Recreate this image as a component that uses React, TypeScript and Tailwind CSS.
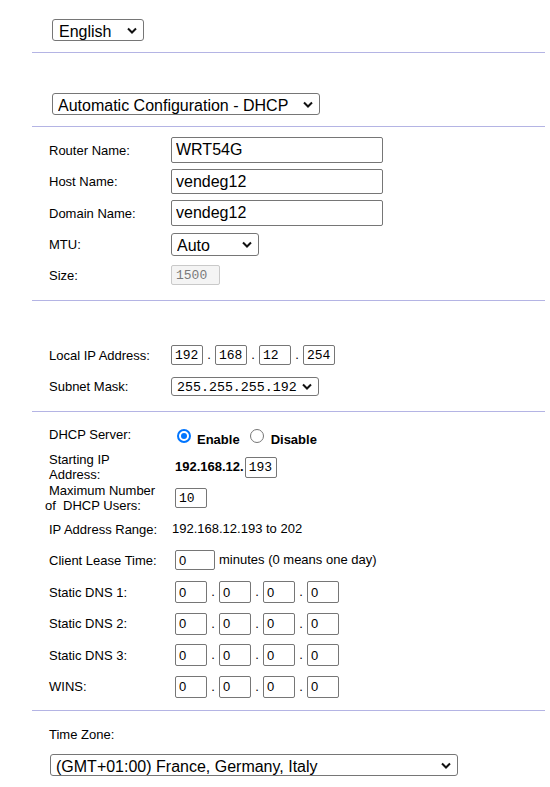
import React from "react";

const mono = "font-['Liberation_Mono','Courier_New',monospace]";

const Chevron = () => (
  <svg width="10" height="7" viewBox="0 0 10 7" className="shrink-0">
    <path d="M1 1.5l4 4 4-4" fill="none" stroke="#111" strokeWidth="2" />
  </svg>
);

type SelectProps = { options: string[]; box: string; text: string };

const Select = ({ options, box, text }: SelectProps) => (
  <div
    className={`flex items-center border border-[#767676] rounded-[3px] bg-white pr-[6px] ${box}`}
  >
    <select
      defaultValue={options[0]}
      className={`appearance-none bg-transparent outline-none flex-1 min-w-0 h-full p-0 ${text}`}
    >
      {options.map((o) => (
        <option key={o}>{o}</option>
      ))}
    </select>
    <Chevron />
  </div>
);

const Radio = ({ checked, className }: { checked?: boolean; className: string }) =>
  checked ? (
    <span
      className={`w-[14px] h-[14px] rounded-full border-2 border-[#0075ff] bg-white flex items-center justify-center shrink-0 ${className}`}
    >
      <span className="block w-[6px] h-[6px] rounded-full bg-[#0075ff]" />
    </span>
  ) : (
    <span
      className={`block w-[14px] h-[14px] rounded-full border border-[#767676] bg-white shrink-0 ${className}`}
    />
  );

const IpGroup = ({ values, box }: { values: string[]; box: string }) => (
  <div className="flex items-center">
    {values.map((v, i) => (
      <React.Fragment key={i}>
        {i > 0 && <span className="w-[12px] text-center">.</span>}
        <input defaultValue={v} className={box} />
      </React.Fragment>
    ))}
  </div>
);

const Row = ({
  label,
  width,
  className = "",
  children,
}: {
  label: React.ReactNode;
  width: string;
  className?: string;
  children?: React.ReactNode;
}) => (
  <div className={`flex items-center ${className}`}>
    <div className={`shrink-0 leading-[15px] ${width}`}>{label}</div>
    {children}
  </div>
);

const textInput =
  "w-[212px] border border-[#767676] rounded-[2px] pl-[4px] text-[16px] bg-white";
const monoBox = `w-[32px] h-[20px] border border-[#767676] rounded-[2px] px-[3px] text-[13px] ${mono}`;
const sansBox =
  "w-[32px] h-[22px] border border-[#767676] rounded-[2px] px-[3px] text-[13px]";

export default function App() {
  return (
    <div className="w-[550px] min-h-[787px] bg-white text-black text-[13px] font-['Liberation_Sans',Arial,sans-serif] pl-[32px] pr-[5px]">
      {/* language */}
      <div className="border-b border-[#b4b4e4] pt-[19px] pb-[11px] pl-[20px]">
        <Select
          options={["English"]}
          box="w-[92px] h-[22px]"
          text="text-[16px] pl-[6px]"
        />
      </div>

      {/* connection type */}
      <div className="border-b border-[#b4b4e4] pt-[40px] pb-[11px] pl-[20px]">
        <Select
          options={["Automatic Configuration - DHCP"]}
          box="w-[268px] h-[22px]"
          text="text-[16px] pl-[5px]"
        />
      </div>

      {/* router settings */}
      <div className="border-b border-[#b4b4e4] pt-[10px] pb-[15px] pl-[17px]">
        <Row label="Router Name:" width="w-[122px]">
          <input defaultValue="WRT54G" className={`${textInput} h-[26px]`} />
        </Row>
        <Row label="Host Name:" width="w-[122px]" className="mt-[6px]">
          <input defaultValue="vendeg12" className={`${textInput} h-[25px]`} />
        </Row>
        <Row label="Domain Name:" width="w-[122px]" className="mt-[6px]">
          <input defaultValue="vendeg12" className={`${textInput} h-[26px]`} />
        </Row>
        <Row label="MTU:" width="w-[122px]" className="mt-[7px]">
          <Select
            options={["Auto", "Manual"]}
            box="w-[88px] h-[23px]"
            text="text-[16px] pl-[5px]"
          />
        </Row>
        <Row label="Size:" width="w-[122px]" className="mt-[9px]">
          <input
            disabled
            defaultValue="1500"
            className={`w-[49px] h-[20px] border border-[#c9c9c9] rounded-[2px] bg-[#f4f4f4] text-[#7a7a7a] px-[4px] text-[13px] ${mono}`}
          />
        </Row>
      </div>

      {/* network setup */}
      <div className="border-b border-[#b4b4e4] pt-[44px] pb-[15px] pl-[17px]">
        <Row label="Local IP Address:" width="w-[122px]">
          <IpGroup values={["192", "168", "12", "254"]} box={monoBox} />
        </Row>
        <Row label="Subnet Mask:" width="w-[122px]" className="mt-[12px]">
          <Select
            options={["255.255.255.192"]}
            box="w-[148px] h-[19px]"
            text={`text-[13.3px] pl-[5px] ${mono}`}
          />
        </Row>
      </div>

      {/* dhcp */}
      <div className="border-b border-[#b4b4e4] pt-[15px] pb-[12.5px] pl-[17px]">
        <div className="flex items-start h-[20px]">
          <div className="w-[123px] shrink-0 leading-[15px]">DHCP Server:</div>
          <div className="flex items-start pt-[2px] font-bold">
            <Radio checked className="ml-[5px]" />
            <span className="ml-[6px] mt-[2.5px] leading-[15px]">Enable</span>
            <Radio className="ml-[10px]" />
            <span className="ml-[7px] mt-[2.5px] leading-[15px]">Disable</span>
          </div>
        </div>
        <Row
          label={
            <>
              Starting IP
              <br />
              Address:
            </>
          }
          width="w-[123px]"
          className="mt-[5px] h-[30px]"
        >
          <span className="ml-[3px] font-bold">192.168.12.</span>
          <input
            defaultValue="193"
            className={`${monoBox} h-[21px] ml-[1px]`}
          />
        </Row>
        <Row
          label={
            <>
              <span className="block">Maximum Number</span>
              <span className="block -ml-[4px]">of{"\u00a0"} DHCP Users:</span>
            </>
          }
          width="w-[123px]"
          className="mt-[1px] h-[30px]"
        >
          <input defaultValue="10" className={`${monoBox} ml-[3px]`} />
        </Row>
        <Row
          label="IP Address Range:"
          width="w-[123px]"
          className="mt-[8px] h-[16px]"
        >
          <span>192.168.12.193 to 202</span>
        </Row>
        <Row label="Client Lease Time:" width="w-[123px]" className="mt-[13px]">
          <input
            defaultValue="0"
            className="w-[40px] h-[20px] border border-[#767676] rounded-[2px] px-[3px] text-[13px] ml-[3px]"
          />
          <span className="ml-[4px]">minutes (0 means one day)</span>
        </Row>
        {["Static DNS 1:", "Static DNS 2:", "Static DNS 3:", "WINS:"].map(
          (label, i) => (
            <Row
              key={label}
              label={label}
              width="w-[123px]"
              className={i === 0 ? "mt-[11px]" : "mt-[9.5px]"}
            >
              <div className="ml-[3px]">
                <IpGroup values={["0", "0", "0", "0"]} box={sansBox} />
              </div>
            </Row>
          ),
        )}
      </div>

      {/* time zone */}
      <div className="pt-[15.5px] pl-[17px]">
        <div className="leading-[15px]">Time Zone:</div>
        <div className="mt-[12.5px] ml-[1px]">
          <Select
            options={["(GMT+01:00) France, Germany, Italy"]}
            box="w-[408px] h-[22px]"
            text="text-[16px] pl-[5px]"
          />
        </div>
      </div>
    </div>
  );
}
